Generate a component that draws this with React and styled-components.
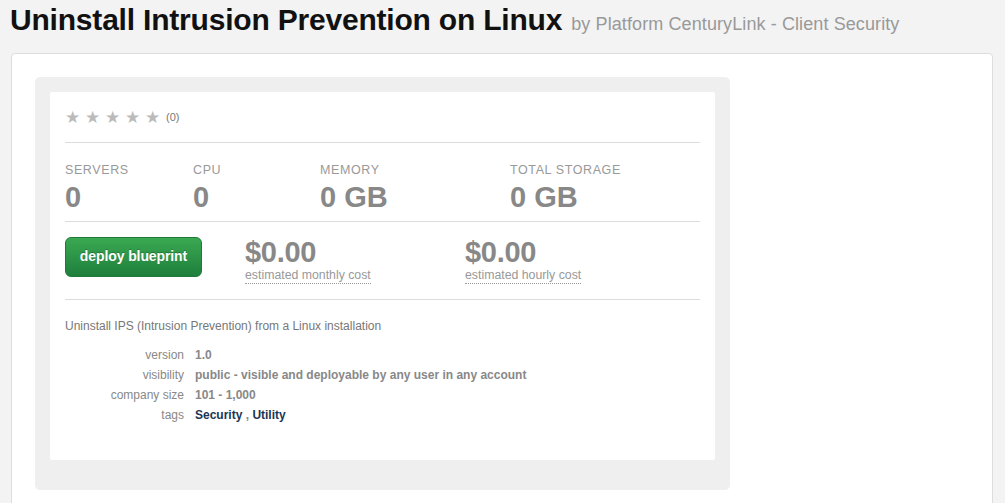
import React from "react";
import styled, { createGlobalStyle } from "styled-components";

const Global = createGlobalStyle`
  html, body { margin: 0; padding: 0; }
  body {
    background: #f3f3f3;
    font-family: "Liberation Sans", Arial, Helvetica, sans-serif;
    color: #333;
  }
`;

const Page = styled.div`
  width: 1005px;
  height: 503px;
  overflow: hidden;
`;

const Header = styled.div`
  display: flex;
  align-items: baseline;
  gap: 9px;
  padding: 3px 0 0 10px;
  height: 53px;
  box-sizing: border-box;
`;

const Title = styled.h1`
  margin: 0;
  font-size: 30px;
  font-weight: 700;
  color: #111;
  letter-spacing: -0.2px;
`;

const Byline = styled.span`
  font-size: 18px;
  color: #999;
  letter-spacing: 0.1px;
`;

const Panel = styled.div`
  margin: 0 12px 0 11px;
  background: #fff;
  border: 1px solid #ddd;
  border-radius: 4px;
  padding: 23px 0 0 23px;
  height: 480px;
  box-sizing: border-box;
`;

const Card = styled.div`
  width: 695px;
  background: #efefef;
  border-radius: 5px;
  padding: 15px 15px 30px;
  box-sizing: border-box;
`;

const Inner = styled.div`
  background: #fff;
  border-radius: 2px;
  padding: 0 15px 36px;
  height: 368px;
  box-sizing: border-box;
`;

const Section = styled.div`
  border-bottom: ${(p) => (p.$last ? "none" : "1px solid #dcdcdc")};
`;

const RatingRow = styled.div`
  display: flex;
  align-items: center;
  height: 50px;
`;

const Stars = styled.div`
  display: flex;
  gap: 5px;
  color: #bbb;
  font-size: 17px;
  line-height: 1;
`;

const Count = styled.span`
  margin-left: 6px;
  font-size: 11px;
  color: #777;
`;

const Stats = styled.div`
  display: grid;
  grid-template-columns: 128px 127px 190px 1fr;
  padding: 20px 0 9px;
`;

const Stat = styled.div`
  display: flex;
  flex-direction: column;
  gap: 4px;
`;

const StatLabel = styled.div`
  font-size: 12.5px;
  letter-spacing: 0.6px;
  color: #999;
  line-height: 15px;
`;

const StatValue = styled.div`
  font-size: 29px;
  font-weight: 700;
  color: #888;
  line-height: 30px;
`;

const CostRow = styled.div`
  display: flex;
  align-items: flex-start;
  padding: 15px 0 15px;
`;

const DeployButton = styled.button`
  width: 137px;
  height: 40px;
  border: 1px solid #1d7a38;
  border-radius: 6px;
  background: linear-gradient(#3aa952, #1e7f3c);
  color: #fff;
  font-family: "Liberation Sans", Arial, sans-serif;
  font-size: 14px;
  font-weight: 700;
  letter-spacing: -0.1px;
  text-shadow: 0 -1px 0 rgba(0, 0, 0, 0.25);
  margin-right: 43px;
  cursor: pointer;
  box-sizing: border-box;
  padding: 0 0 2px;
`;

const Cost = styled.div`
  width: 220px;
  display: flex;
  flex-direction: column;
  align-items: flex-start;
`;

const CostValue = styled.div`
  font-size: 29px;
  font-weight: 700;
  color: #888;
  line-height: 30px;
  letter-spacing: -0.3px;
`;

const CostLabel = styled.span`
  font-size: 12.3px;
  color: #999;
  line-height: 15px;
  margin-top: 1px;
  border-bottom: 1px dotted #999;
`;

const Description = styled.p`
  margin: 0;
  padding: 19px 0 12px;
  font-size: 12px;
  color: #777;
  line-height: 14px;
`;

const Meta = styled.div`
  display: grid;
  grid-template-columns: 119px 1fr;
  column-gap: 11px;
  font-size: 12px;
  line-height: 20px;
`;

const MetaLabel = styled.div`
  text-align: right;
  color: #888;
`;

const MetaValue = styled.div`
  font-weight: 700;
  color: #888;
`;

const Tag = styled.a`
  color: #1c3551;
  font-weight: 700;
  text-decoration: none;
`;

const Star = () => <span>★</span>;

export default function App() {
  const stats = [
    ["Servers", "0"],
    ["CPU", "0"],
    ["Memory", "0 GB"],
    ["Total Storage", "0 GB"],
  ];
  return (
    <Page>
      <Global />
      <Header>
        <Title>Uninstall Intrusion Prevention on Linux</Title>
        <Byline>by Platform CenturyLink - Client Security</Byline>
      </Header>
      <Panel>
        <Card>
          <Inner>
            <Section>
              <RatingRow>
                <Stars>
                  <Star />
                  <Star />
                  <Star />
                  <Star />
                  <Star />
                </Stars>
                <Count>(0)</Count>
              </RatingRow>
            </Section>
            <Section>
              <Stats>
                {stats.map(([l, v]) => (
                  <Stat key={l}>
                    <StatLabel>{l.toUpperCase()}</StatLabel>
                    <StatValue>{v}</StatValue>
                  </Stat>
                ))}
              </Stats>
            </Section>
            <Section>
              <CostRow>
                <DeployButton>deploy blueprint</DeployButton>
                <Cost>
                  <CostValue>$0.00</CostValue>
                  <CostLabel>estimated monthly cost</CostLabel>
                </Cost>
                <Cost>
                  <CostValue>$0.00</CostValue>
                  <CostLabel>estimated hourly cost</CostLabel>
                </Cost>
              </CostRow>
            </Section>
            <Section $last>
              <Description>
                Uninstall IPS (Intrusion Prevention) from a Linux installation
              </Description>
              <Meta>
                <MetaLabel>version</MetaLabel>
                <MetaValue>1.0</MetaValue>
                <MetaLabel>visibility</MetaLabel>
                <MetaValue>
                  public - visible and deployable by any user in any account
                </MetaValue>
                <MetaLabel>company size</MetaLabel>
                <MetaValue>101 - 1,000</MetaValue>
                <MetaLabel>tags</MetaLabel>
                <MetaValue>
                  <Tag href="#">Security</Tag> , <Tag href="#">Utility</Tag>
                </MetaValue>
              </Meta>
            </Section>
          </Inner>
        </Card>
      </Panel>
    </Page>
  );
}
